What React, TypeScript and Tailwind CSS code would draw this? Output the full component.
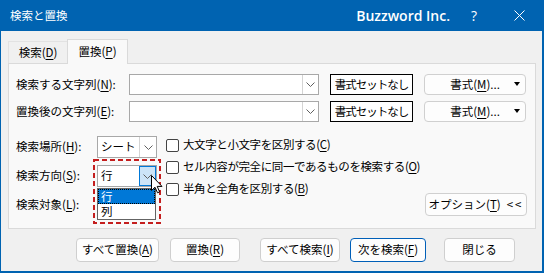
import type { ReactNode } from 'react';

function Key({ k }: { k: string }) {
  return <span className="underline underline-offset-[2px]">{k}</span>;
}

function Chevron() {
  return (
    <svg width="9" height="5" viewBox="0 0 9 5">
      <path d="M0.5 0.5 L4.5 4.5 L8.5 0.5" fill="none" stroke="#606060" strokeWidth="1" />
    </svg>
  );
}

function TextCombo() {
  return (
    <div className="flex h-[21px] w-[190px] border border-[#a8a8a8] bg-white">
      <div className="flex-1" />
      <div className="flex w-[16px] items-center justify-center border-l border-[#d4d4d4]">
        <Chevron />
      </div>
    </div>
  );
}

function Combo({ value, active }: { value: string; active?: boolean }) {
  return (
    <div className="flex h-[22px] w-[60px] border border-[#a8a8a8] bg-white">
      <div className="flex flex-1 items-center pl-[3px]">{value}</div>
      {active ? (
        <div className="flex w-[17px] items-center justify-center border border-[#0078d7] bg-[#cce4f7]">
          <Chevron />
        </div>
      ) : (
        <div className="flex w-[17px] items-center justify-center border-l border-[#d4d4d4]">
          <Chevron />
        </div>
      )}
    </div>
  );
}

function Check({ children }: { children: ReactNode }) {
  return (
    <div className="flex h-[22px] items-center">
      <div className="h-[13px] w-[13px] shrink-0 rounded-[2px] border border-[#444] bg-white" />
      <span className="ml-[4px] tracking-[-0.4px]">{children}</span>
    </div>
  );
}

function Button({ children, width, primary }: { children: ReactNode; width: string; primary?: boolean }) {
  return (
    <div
      className={
        primary
          ? `flex h-[24px] items-center justify-center rounded-[4px] border border-[#005fb8] bg-[#fdfdfd] ${width}`
          : `flex h-[24px] items-center justify-center rounded-[4px] border border-[#cfcfcf] bg-[#fdfdfd] ${width}`
      }
    >
      {children}
    </div>
  );
}

function Cursor() {
  return (
    <svg width="12" height="19" viewBox="0 0 12 19">
      <path
        d="M0.5 0.5 V15.5 L4 12.2 L6.5 17.8 L8.6 16.9 L6.2 11.4 H11 Z"
        fill="white"
        stroke="black"
        strokeWidth="1"
        strokeLinejoin="round"
      />
    </svg>
  );
}

export default function App() {
  return (
    <div className="flex h-[273px] w-[544px] flex-col overflow-hidden whitespace-nowrap bg-[#0063b1] font-['Noto_Sans_CJK_JP',sans-serif] text-[11.5px] leading-none text-black">
      {/* title bar */}
      <div className="flex h-[31px] shrink-0 items-center text-white">
        <span className="pl-[10px] text-[11.5px]">検索と置換</span>
        <span className="ml-auto font-['Open_Sans',sans-serif] text-[14px] font-semibold">Buzzword Inc.</span>
        <span className="ml-[21px] w-[8px] font-['Open_Sans',sans-serif] text-[14px]">?</span>
        <svg width="11" height="11" viewBox="0 0 11 11" className="ml-[35px] mr-[19px]">
          <path d="M0.5 0.5 L10.5 10.5 M10.5 0.5 L0.5 10.5" stroke="white" strokeWidth="1" />
        </svg>
      </div>

      {/* body */}
      <div className="flex flex-1 flex-col border-b-2 border-l border-r-2 border-[#0063b1] bg-[#f0f0f0]">
        {/* tabs */}
        <div className="ml-[7px] flex items-end pt-[8px]">
          <div className="flex h-[22px] w-[59px] items-center justify-center border-l border-t border-[#e2e2e2]">
            検索(<Key k="D" />)
          </div>
          <div className="relative z-10 -mb-px flex h-[25px] w-[61px] items-center justify-center border-x border-t border-[#dadada] bg-[#f9f9f9] pb-[1px]">
            置換(<Key k="P" />)
          </div>
        </div>

        {/* panel */}
        <div className="ml-[7px] h-[166px] w-[528px] border border-[#dadada] bg-[#f9f9f9] pl-[7px] pt-[10px]">
          <div className="flex h-[21px] items-center">
            <span className="w-[113px]">
              検索する文字列(<Key k="N" />):
            </span>
            <TextCombo />
            <div className="ml-[11px] flex h-[21px] w-[83px] items-center justify-center border border-black bg-white tracking-[-1px]">
              書式セットなし
            </div>
            <div className="relative ml-[11px] flex h-[21px] w-[102px] items-center justify-center rounded-[4px] border border-[#d0d0d0] bg-[#fdfdfd]">
              書式(<Key k="M" />)...
              <span className="absolute right-[5px] top-[7px] h-0 w-0 border-x-[3px] border-t-[4px] border-x-transparent border-t-black" />
            </div>
          </div>

          <div className="mt-[6px] flex h-[21px] items-center">
            <span className="w-[113px]">
              置換後の文字列(<Key k="E" />):
            </span>
            <TextCombo />
            <div className="ml-[11px] flex h-[21px] w-[83px] items-center justify-center border border-black bg-white tracking-[-1px]">
              書式セットなし
            </div>
            <div className="relative ml-[11px] flex h-[21px] w-[102px] items-center justify-center rounded-[4px] border border-[#d0d0d0] bg-[#fdfdfd]">
              書式(<Key k="M" />)...
              <span className="absolute right-[5px] top-[7px] h-0 w-0 border-x-[3px] border-t-[4px] border-x-transparent border-t-black" />
            </div>
          </div>

          {/* options */}
          <div className="mt-[12px] flex">
            <div className="flex flex-col gap-[7px] pt-[2px]">
              <div className="flex h-[22px] items-center">
                <span className="w-[81px]">
                  検索場所(<Key k="H" />):
                </span>
                <Combo value="シート" />
              </div>
              <div className="flex h-[22px] items-center">
                <span className="w-[81px]">
                  検索方向(<Key k="S" />):
                </span>
                <div className="relative">
                  <Combo value="行" active />
                  <div className="absolute left-0 top-[23px] z-20 w-[59px] border border-[#646464] bg-white">
                    <div className="flex h-[15px] items-center border border-dotted border-black bg-[#0078d7] pl-[2px] text-white">
                      行
                    </div>
                    <div className="flex h-[15px] items-center pl-[3px]">列</div>
                  </div>
                  <svg
                    width="68"
                    height="65"
                    viewBox="0 0 68 65"
                    className="pointer-events-none absolute left-[-4px] top-[-6px] z-30"
                  >
                    <rect x="1" y="1" width="66" height="63" fill="none" stroke="#c41e1e" strokeWidth="2" strokeDasharray="5 3" />
                  </svg>
                  <div className="absolute left-[54px] top-[10px] z-40">
                    <Cursor />
                  </div>
                </div>
              </div>
              <div className="flex h-[22px] items-center">
                <span className="w-[81px]">
                  検索対象(<Key k="L" />):
                </span>
              </div>
            </div>

            <div className="ml-[9px] flex flex-col">
              <Check>
                大文字と小文字を区別する(<Key k="C" />)
              </Check>
              <Check>
                セル内容が完全に同一であるものを検索する(<Key k="O" />)
              </Check>
              <Check>
                半角と全角を区別する(<Key k="B" />)
              </Check>
            </div>

            <div className="ml-auto mr-[8px] flex h-[23px] w-[102px] shrink-0 items-center justify-center self-end rounded-[4px] border border-[#d0d0d0] bg-[#fdfdfd]">
              オプション(<Key k="T" />)<span className="ml-[6px] tracking-[2px]">&lt;&lt;</span>
            </div>
          </div>
        </div>

        {/* bottom buttons */}
        <div className="mt-[9px] flex pl-[75px]">
          <Button width="w-[83px]">
            すべて置換(<Key k="A" />)
          </Button>
          <div className="ml-[11px]">
            <Button width="w-[70px]">
              置換(<Key k="R" />)
            </Button>
          </div>
          <div className="ml-[20px]">
            <Button width="w-[80px]">
              すべて検索(<Key k="I" />)
            </Button>
          </div>
          <div className="ml-[10px]">
            <Button width="w-[76px]" primary>
              次を検索(<Key k="F" />)
            </Button>
          </div>
          <div className="ml-[18px]">
            <Button width="w-[71px]">閉じる</Button>
          </div>
        </div>
      </div>
    </div>
  );
}
